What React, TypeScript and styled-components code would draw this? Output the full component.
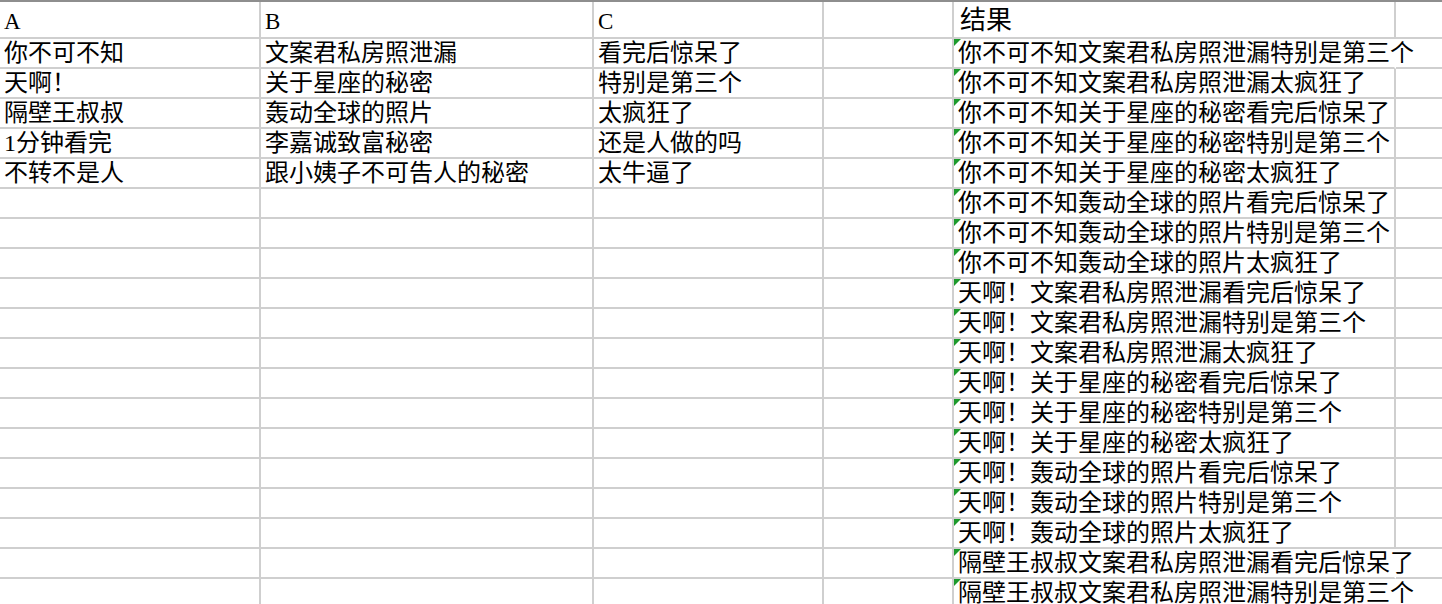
import React from "react";
import styled, { createGlobalStyle, css } from "styled-components";

const GlobalStyle = createGlobalStyle`
  html, body {
    margin: 0;
    padding: 0;
    background: #ffffff;
    overflow: hidden;
  }
  body {
    font-family: "Liberation Serif", "Noto Sans CJK SC", serif;
    color: #000;
  }
`;

const Sheet = styled.div`
  display: grid;
  grid-template-columns: 261px 333px 230px 130px 442px 1fr;
  grid-auto-rows: 30px;
  grid-template-rows: 37px;
  border-top: 2px solid #8e8e8e;
  width: 1442px;
  height: 602px;
  overflow: hidden;
`;

const Cell = styled.div<{ $header?: boolean; $overflow?: boolean; $flag?: boolean; $last?: boolean }>`
  position: relative;
  box-sizing: border-box;
  display: flex;
  align-items: flex-end;
  padding-left: 4px;
  border-bottom: 2px solid #cfcfcf;
  border-right: ${(p) => (p.$last ? "none" : "2px solid #cfcfcf")};
  white-space: nowrap;
  overflow: visible;
  font-size: 24px;
  line-height: 28px;
  min-width: 0;
  ${(p) =>
    p.$header &&
    css`
      font-size: 23px;
      line-height: 31px;
    `}
  ${(p) =>
    p.$overflow &&
    css`
      border-right-color: transparent;
      z-index: 1;
    `}
  ${(p) =>
    p.$flag &&
    css`
      &::before {
        content: "";
        position: absolute;
        left: 0;
        top: 0;
        width: 0;
        height: 0;
        border-top: 7px solid #1c9a2c;
        border-right: 7px solid transparent;
      }
    `}
`;

const HeaderTitle = styled.span`
  font-size: 26px;
  line-height: 32px;
  padding-left: 2px;
`;

const colA = ["你不可不知", "天啊！", "隔壁王叔叔", "1分钟看完", "不转不是人"];
const colB = ["文案君私房照泄漏", "关于星座的秘密", "轰动全球的照片", "李嘉诚致富秘密", "跟小姨子不可告人的秘密"];
const colC = ["看完后惊呆了", "特别是第三个", "太疯狂了", "还是人做的吗", "太牛逼了"];

const results = [
  "你不可不知文案君私房照泄漏特别是第三个",
  "你不可不知文案君私房照泄漏太疯狂了",
  "你不可不知关于星座的秘密看完后惊呆了",
  "你不可不知关于星座的秘密特别是第三个",
  "你不可不知关于星座的秘密太疯狂了",
  "你不可不知轰动全球的照片看完后惊呆了",
  "你不可不知轰动全球的照片特别是第三个",
  "你不可不知轰动全球的照片太疯狂了",
  "天啊！文案君私房照泄漏看完后惊呆了",
  "天啊！文案君私房照泄漏特别是第三个",
  "天啊！文案君私房照泄漏太疯狂了",
  "天啊！关于星座的秘密看完后惊呆了",
  "天啊！关于星座的秘密特别是第三个",
  "天啊！关于星座的秘密太疯狂了",
  "天啊！轰动全球的照片看完后惊呆了",
  "天啊！轰动全球的照片特别是第三个",
  "天啊！轰动全球的照片太疯狂了",
  "隔壁王叔叔文案君私房照泄漏看完后惊呆了",
  "隔壁王叔叔文案君私房照泄漏特别是第三个",
];

export default function App() {
  return (
    <>
      <GlobalStyle />
      <Sheet>
        <Cell $header>A</Cell>
        <Cell $header>B</Cell>
        <Cell $header>C</Cell>
        <Cell $header />
        <Cell $header>
          <HeaderTitle>结果</HeaderTitle>
        </Cell>
        <Cell $header $last />
        {results.map((r, i) => {
          const overflow = [...r].length > 18;
          return (
            <React.Fragment key={i}>
              <Cell>{colA[i] ?? ""}</Cell>
              <Cell>{colB[i] ?? ""}</Cell>
              <Cell>{colC[i] ?? ""}</Cell>
              <Cell />
              <Cell $flag $overflow={overflow}>
                {r}
              </Cell>
              <Cell $last />
            </React.Fragment>
          );
        })}
      </Sheet>
    </>
  );
}
